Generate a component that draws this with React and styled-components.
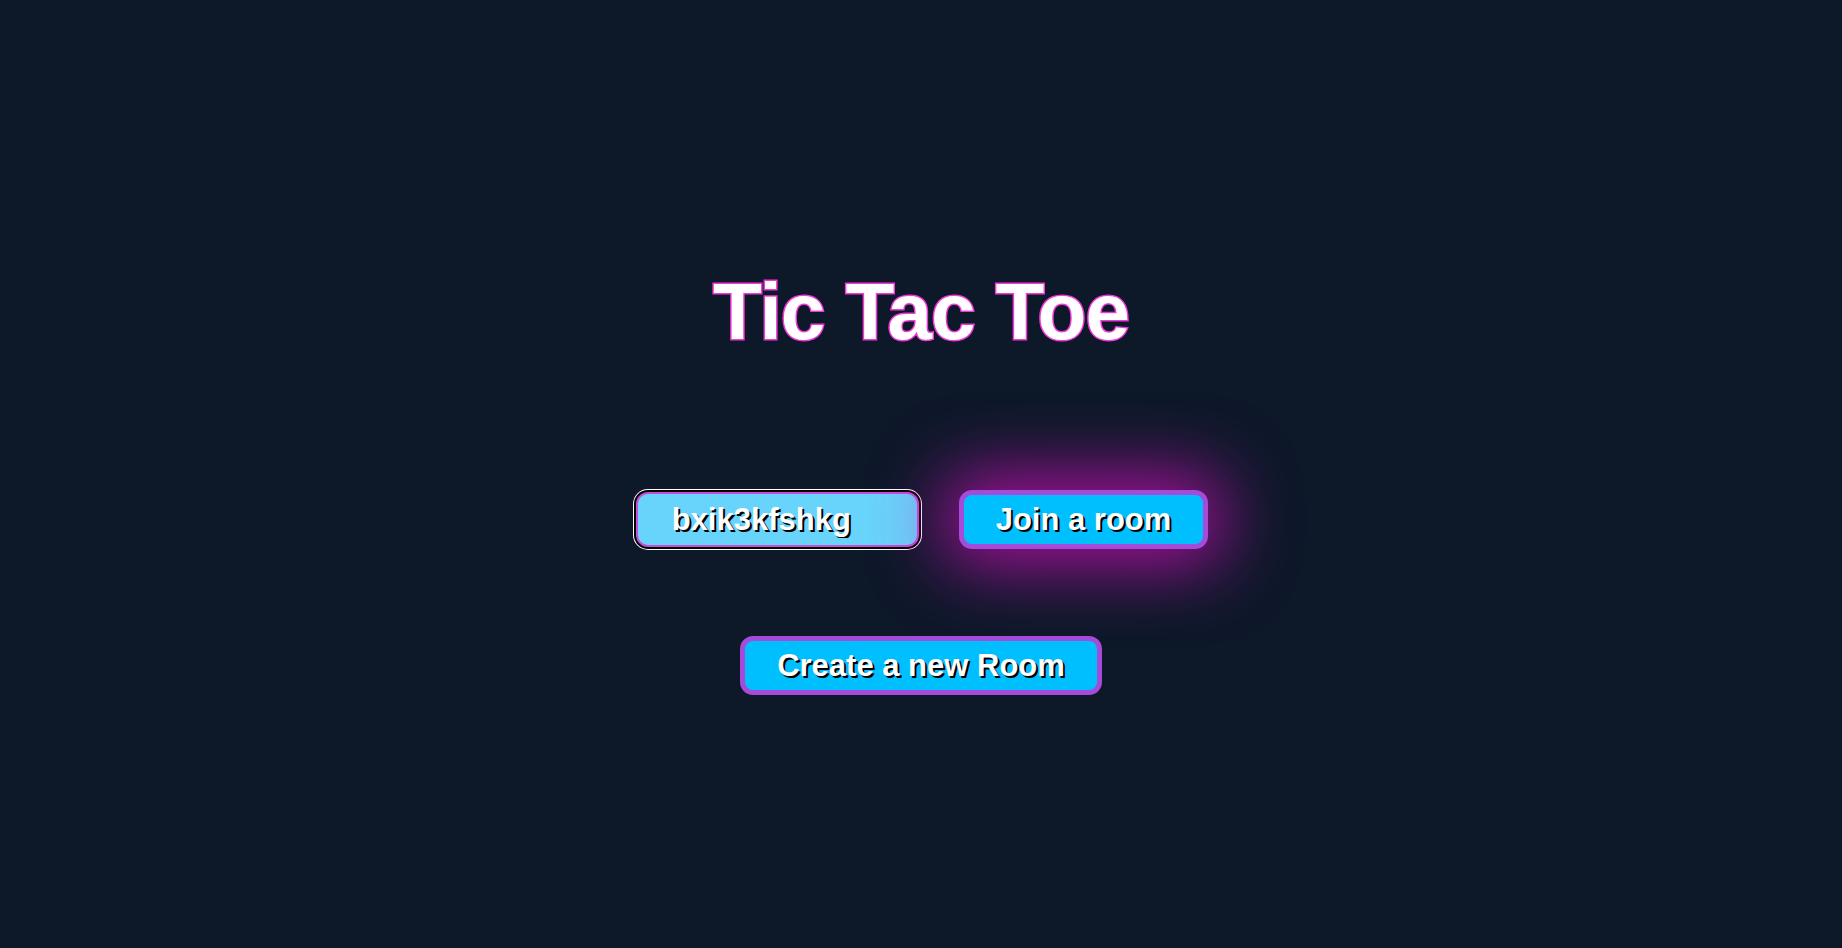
import React, { useState } from "react";
import styled, { createGlobalStyle } from "styled-components";

const GlobalStyle = createGlobalStyle`
  html, body {
    margin: 0;
    padding: 0;
    background: #0d1829;
  }
  body {
    font-family: "Liberation Sans", Arial, sans-serif;
  }
`;

const Page = styled.main`
  min-height: 100vh;
  box-sizing: border-box;
  display: flex;
  flex-direction: column;
  align-items: center;
  padding-top: 266px;
  background: #0d1829;
`;

const Title = styled.h1`
  margin: 0;
  font-size: 80px;
  line-height: 1.15;
  font-weight: 700;
  letter-spacing: -1px;
  color: #fff;
  -webkit-text-stroke: 3px #f238d8;
  paint-order: stroke fill;
`;

const JoinRow = styled.div`
  display: flex;
  align-items: center;
  gap: 40px;
  margin-top: 132px;
  padding-left: 2px;
`;

const RoomInput = styled.input`
  box-sizing: border-box;
  width: 283px;
  height: 55px;
  padding: 0 34px;
  border: 2px solid #c94bd9;
  border-radius: 12px;
  background: #68d4fb;
  color: #fff;
  font-family: inherit;
  font-size: 31px;
  font-weight: 700;
  text-shadow: 2px 2px 0 #000;
  outline: none;
  box-shadow: 0 0 0 2px #000, 0 0 0 3px #fff;
`;

const Button = styled.button`
  box-sizing: border-box;
  height: 59px;
  padding: 0 32px;
  border: 5px solid #a64bd9;
  border-radius: 13px;
  background: #00bfff;
  color: #fff;
  font-family: inherit;
  font-size: 31px;
  font-weight: 700;
  text-shadow: 2px 2px 0 #000;
  cursor: pointer;
  box-shadow: ${(p) =>
    p.$glow ? "0 0 70px 16px rgba(205, 16, 185, 0.8)" : "none"};
`;

const CreateButton = styled(Button)`
  margin-top: 87px;
`;

export default function App() {
  const [roomId, setRoomId] = useState("bxik3kfshkg");

  return (
    <>
      <GlobalStyle />
      <Page>
        <Title>Tic Tac Toe</Title>
        <JoinRow>
          <RoomInput
            value={roomId}
            onChange={(e) => setRoomId(e.target.value)}
          />
          <Button $glow>Join a room</Button>
        </JoinRow>
        <CreateButton>Create a new Room</CreateButton>
      </Page>
    </>
  );
}
